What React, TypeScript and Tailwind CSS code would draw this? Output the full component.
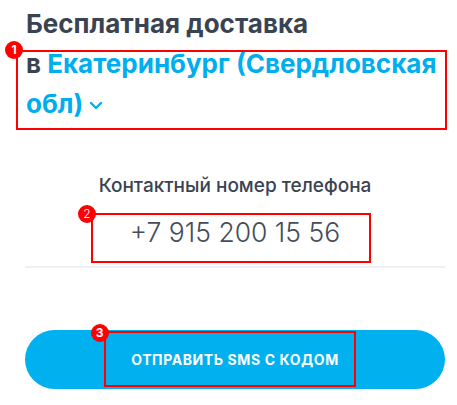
import React from "react";

function Badge({ n, className }: { n: string; className: string }) {
  return (
    <span
      className={
        "absolute flex h-[18px] w-[18px] items-center justify-center rounded-full bg-[#f00] text-[12px] leading-none text-white " +
        className
      }
    >
      {n}
    </span>
  );
}

export default function App() {
  return (
    <div
      className="h-[405px] w-[457px] overflow-hidden bg-white"
      style={{ fontFamily: "Inter, 'Noto Sans', sans-serif" }}
    >
      <div className="flex flex-col pl-[25px] pr-[12px] pt-[4px]">
        <div className="pl-[1px] text-[26px] font-bold leading-[40px] text-[#3a4352]">
          <div>Бесплатная доставка</div>
          <div className="relative">
            <div className="pointer-events-none absolute left-[-10px] right-[-2px] top-[6px] bottom-[-6px] border-2 border-[#f00]" />
            <Badge n="1" className="left-[-21px] top-[-3px]" />
            <span>в </span>
            <span className="text-[#00aeef]">Екатеринбург (Свердловская</span>
            <br />
            <span className="text-[#00aeef]">
              обл)
              <svg
                className="ml-[6px] inline-block align-middle"
                width="14"
                height="9"
                viewBox="0 0 14 9"
                fill="none"
              >
                <path d="M2 2l5 5 5-5" stroke="#00aeef" strokeWidth="2.4" strokeLinecap="round" strokeLinejoin="round" />
              </svg>
            </span>
          </div>
        </div>

        <div className="mt-[50px] text-center text-[19px] font-medium leading-[24px] text-[#3a4352]">
          Контактный номер телефона
        </div>

        <div className="relative mt-[14px] h-[56px] border-b-2 border-[#eef0f2] text-center text-[26.5px] font-light leading-[40px] text-[#444d5a]">
          +7 915 200 15 56
          <div className="pointer-events-none absolute left-[66px] top-[1px] h-[50px] w-[280px] border-2 border-[#f00]" />
          <Badge n="2" className="left-[53px] top-[-7px]" />
        </div>

        <div className="relative mt-[62px] flex h-[59px] items-center justify-center rounded-full bg-[#00b0ef] text-[14px] font-bold tracking-[0.6px] text-white">
          ОТПРАВИТЬ SMS С КОДОМ
          <div className="pointer-events-none absolute left-[79px] top-[1px] h-[56px] w-[252px] border-2 border-[#f00]" />
          <Badge n="3" className="left-[66px] top-[-6px]" />
        </div>
      </div>
    </div>
  );
}
